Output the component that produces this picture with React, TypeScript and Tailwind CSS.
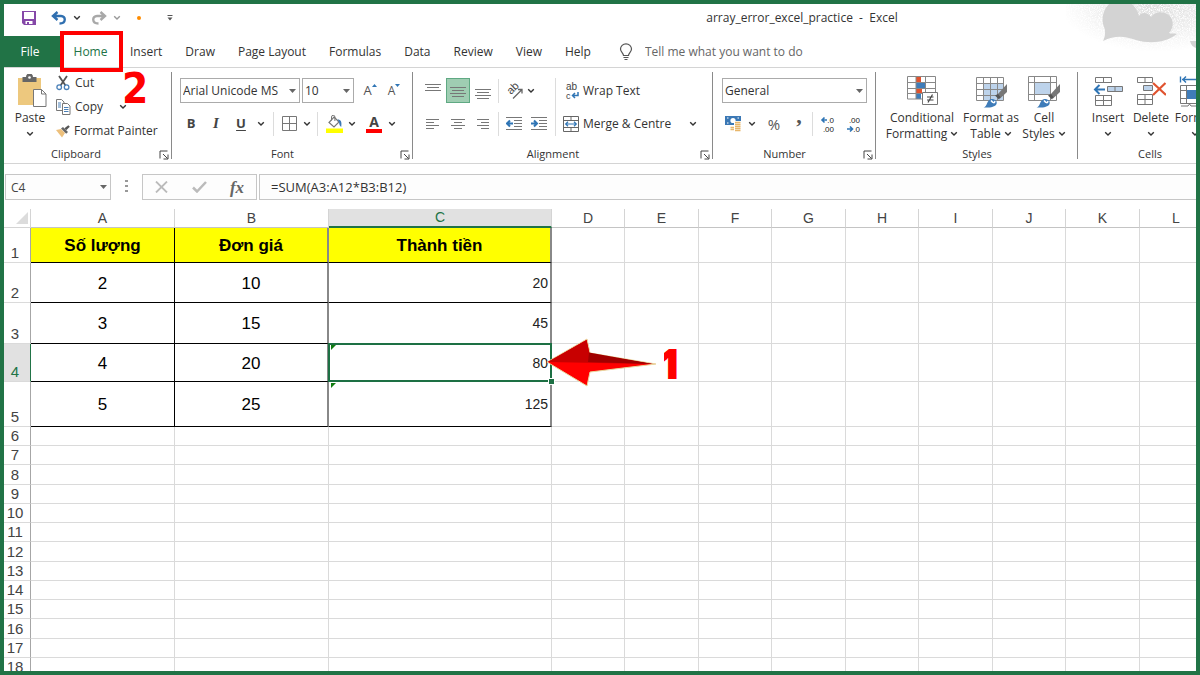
import type { ReactNode } from 'react';

const TABS = ['Insert', 'Draw', 'Page Layout', 'Formulas', 'Data', 'Review', 'View', 'Help'];

const COLUMNS = [
    { name: 'A', width: 144 },
    { name: 'B', width: 154 },
    { name: 'C', width: 223 },
    { name: 'D', width: 73 },
    { name: 'E', width: 74 },
    { name: 'F', width: 73 },
    { name: 'G', width: 74 },
    { name: 'H', width: 73 },
    { name: 'I', width: 74 },
    { name: 'J', width: 73 },
    { name: 'K', width: 74 },
    { name: 'L', width: 73 },
];

const ROWS: { height: number; cells?: string[] }[] = [
    { height: 35, cells: ['Số lượng', 'Đơn giá', 'Thành tiền'] },
    { height: 40, cells: ['2', '10', '20'] },
    { height: 41, cells: ['3', '15', '45'] },
    { height: 38, cells: ['4', '20', '80'] },
    { height: 45, cells: ['5', '25', '125'] },
    { height: 19 },
    { height: 19 },
    { height: 20 },
    { height: 19 },
    { height: 19 },
    { height: 19 },
    { height: 20 },
    { height: 19 },
    { height: 19 },
    { height: 19 },
    { height: 20 },
    { height: 19 },
    { height: 19 },
];

/* ---------- small shared pieces ---------- */

function Chevron({ className = 'text-[#333]' }: { className?: string }) {
    return (
        <svg className={`shrink-0 ${className}`} width="8" height="6" viewBox="0 0 8 6" fill="none" stroke="currentColor" strokeWidth="1.4">
            <path d="M1.2 1.2 4 4l2.8-2.8" />
        </svg>
    );
}

function Triangle() {
    return (
        <svg className="pointer-events-none absolute right-1 top-1/2 -translate-y-1/2" width="7" height="4" viewBox="0 0 7 4">
            <path d="M0 0h7L3.5 4z" fill="#666" />
        </svg>
    );
}

function Divider() {
    return <span className="h-6 w-px shrink-0 bg-[#dcdcdc]" />;
}

function IconButton({ label, className = 'w-6', children }: { label: string; className?: string; children: ReactNode }) {
    return (
        <button type="button" aria-label={label} className={`flex h-[25px] shrink-0 items-center justify-center ${className}`}>
            {children}
        </button>
    );
}

function Group({ title, className, launcher = true, children }: { title: string; className: string; launcher?: boolean; children: ReactNode }) {
    return (
        <section aria-label={title} className={`relative flex shrink-0 flex-col ${className}`}>
            <div className="h-[78px]">{children}</div>
            <div className="flex h-4 items-center justify-center text-[11px] text-[#333]">{title}</div>
            {launcher && (
                <button type="button" aria-label={`${title} settings`} className="absolute bottom-[3px] right-[3px]">
                    <svg width="10" height="10" viewBox="0 0 10 10" fill="none" stroke="#444" strokeWidth="1">
                        <path d="M1 8.5V1h7.5M4 4l4.5 4.5M4.5 9H9V4.5" />
                    </svg>
                </button>
            )}
            <span className="absolute bottom-1 right-0 top-1 w-px bg-[#8a8a8a]" />
        </section>
    );
}

/* ---------- icons ---------- */

function SaveIcon() {
    return (
        <svg width="14" height="14" viewBox="0 0 14 14">
            <path d="M0 0h14v14H2l-2-2z" fill="#8548a8" />
            <path d="M2 1h10v7H2z" fill="#fff" />
            <path d="M3.5 10h7v3h-7z" fill="#fff" />
            <path d="M5 11h2v2H5z" fill="#8548a8" />
        </svg>
    );
}

function UndoIcon({ className }: { className: string }) {
    return (
        <svg className={className} width="16" height="14" viewBox="0 0 16 14" fill="none" stroke="currentColor" strokeWidth="2.4">
            <path d="M6.500 1 2 5l4.500 4M2.500 5H10c5 0 5.500 7.500-1.500 7.500" />
        </svg>
    );
}

function PasteIcon() {
    return (
        <svg width="30" height="34" viewBox="0 0 30 34">
            <path d="M1 4h23v27H1z" fill="#edc87e" />
            <path d="M5.500 3H9a3.500 3.500 0 0 1 7 0h3.500v5h-14z" fill="#666" />
            <circle cx="12.500" cy="3.500" r="1.300" fill="#fff" />
            <path d="M16.500 15.500h8l4.500 4.500v12.500H16.500z" fill="#fff" stroke="#777" />
            <path d="M24.500 15.500V20H29" fill="none" stroke="#777" />
        </svg>
    );
}

function CutIcon() {
    return (
        <svg width="14" height="16" viewBox="0 0 14 16" fill="none">
            <path d="m3 1 6.500 9.500M11 1 4.500 10.500" stroke="#555" strokeWidth="1.800" />
            <circle cx="3.200" cy="12.200" r="2.300" stroke="#4a80b8" strokeWidth="1.300" />
            <circle cx="10.600" cy="12.200" r="2.300" stroke="#4a80b8" strokeWidth="1.300" />
        </svg>
    );
}

function CopyIcon() {
    return (
        <svg width="15" height="16" viewBox="0 0 15 16" fill="#fff" stroke="#777">
            <path d="M.500.500h5l2.500 2.500v8.500H.500z" />
            <path d="M2 4h3M2 6h3M2 8h3" stroke="#4a80b8" />
            <path d="M6.500 4.500h5l2.500 2.500v8.500H6.500z" />
            <path d="M8 8.500h4.500M8 10.500h4.500M8 12.500h4.500" stroke="#4a80b8" />
        </svg>
    );
}

function PainterIcon() {
    return (
        <svg width="14" height="13" viewBox="0 0 14 13">
            <path d="m0 5 5-1 4 4-3 4.500z" fill="#edc07c" />
            <path d="m5 3.500 2-1.500 5 5-1.800 1.700z" fill="#666" />
            <path d="m8.500 3.200 3.800-3 1.500 1.600-3.600 3.400z" fill="#555" />
        </svg>
    );
}

function BorderIcon() {
    return (
        <svg width="15" height="15" viewBox="0 0 15 15" fill="none" stroke="#777">
            <path d="M.500.500h14v14H.500zM7.500.500v14M.500 7.500h14" />
        </svg>
    );
}

function FillIcon() {
    return (
        <svg width="17" height="18" viewBox="0 0 17 18">
            <path d="m8 2 5 5-5 5-5-4.500z" fill="#fff" stroke="#777" strokeWidth="1.200" />
            <path d="M5.500 5.500V2a1.700 1.700 0 0 1 3.400 0v4" fill="none" stroke="#777" />
            <path d="M11.500 4.500c3.500 0 4.500 2 3.700 7.500-1.500-1-2-3-2.200-5z" fill="#3b78b5" />
            <path d="M0 13.500h17v4.500H0z" fill="#ff0" />
        </svg>
    );
}

/* Stack of horizontal rules; each entry is [x1, x2, y]. */
function Lines({ rows }: { rows: number[][] }) {
    return (
        <svg width="16" height="16" viewBox="0 0 16 16" stroke="#777">
            {rows.map(([a, b, y]) => (
                <path key={y} d={`M${a} ${y + 0.5}H${b}`} />
            ))}
        </svg>
    );
}

function IndentIcon({ flip = false }: { flip?: boolean }) {
    return (
        <svg width="16" height="15" viewBox="0 0 16 15" fill="none">
            <path d="M0 1.500h16M8 4.500h8M8 7.500h8M8 10.500h8M0 13.500h16" stroke="#777" />
            <path d={flip ? 'M0 7.500h5M3 4.500l3 3-3 3' : 'M7 7.500H2M4 4.500l-3 3 3 3'} stroke="#2f75b5" strokeWidth="2" />
        </svg>
    );
}

function OrientationIcon() {
    return (
        <svg className="overflow-visible" width="16" height="16" viewBox="0 0 16 16" fill="none" stroke="#666">
            <text x="4" y="12" transform="rotate(-45 4 12)" className="font-['Liberation_Sans']" fontSize="11" fill="#444" stroke="none">ab</text>
            <path d="M6 15.500 14.500 7M11 6.500h4v4" strokeWidth="1.300" />
        </svg>
    );
}

function WrapIcon() {
    return (
        <svg className="overflow-visible" width="14" height="18" viewBox="0 0 14 18">
            <text x="1" y="8" className="font-['Liberation_Sans']" fontSize="10" fill="#444">ab</text>
            <text x="1" y="17" className="font-['Liberation_Sans']" fontSize="9" fill="#444">c</text>
            <path d="M13 10v3.500H8M10 11l-2.500 2.500L10 16" fill="none" stroke="#2f75b5" strokeWidth="1.500" />
        </svg>
    );
}

function MergeIcon() {
    return (
        <svg width="16" height="16" viewBox="0 0 16 16" fill="none" stroke="#666">
            <path d="M.500.500h15v15H.500zM.500 4.500h15M.500 11.500h15M8 .500v4M8 11.500v4" />
            <path d="M2.500 8h11M5 5.800 2.700 8 5 10.200M11 5.800 13.300 8 11 10.200" stroke="#2f75b5" strokeWidth="1.200" />
        </svg>
    );
}

function MoneyIcon() {
    return (
        <svg width="16" height="17" viewBox="0 0 16 17">
            <path d="M0 1h16v9H0z" fill="#3b78b5" />
            <path d="M2 3h1.500M12.500 3H14M2 8h1.500" stroke="#fff" strokeWidth="1.200" />
            <circle cx="8" cy="5.500" r="2.600" fill="#fff" />
            <path d="M9 6h7v10H5v-5h4z" fill="#fff" />
            <path d="M10 7.500h5.500M10 9.500h5.500M10 11.500h5.500M10 13.500h5.500M10 15.500h5.500M5.500 12.500H9M5.500 14.500H9" stroke="#e8b66a" strokeWidth="1.300" />
        </svg>
    );
}

function DecimalIcon({ decrease = false }: { decrease?: boolean }) {
    return (
        <svg className="overflow-visible font-['Liberation_Sans']" width="14" height="18" viewBox="0 0 14 18" fontSize="8" fill="#222">
            <text x="13" y="8" textAnchor="end">{decrease ? '.00' : '.0'}</text>
            <text x="13" y="17" textAnchor="end">{decrease ? '.0' : '.00'}</text>
            <path
                d={decrease ? 'M0 14h5M3 11.500 5.500 14 3 16.500' : 'M6 5H1M3.500 2.500 1 5l2.500 2.500'}
                fill="none"
                stroke="#2f75b5"
                strokeWidth="1.600"
            />
        </svg>
    );
}

function ConditionalIcon() {
    return (
        <svg width="32" height="30" viewBox="0 0 32 30">
            <path d="M10 1h5v6h-5zM10 12.500h6V18h-6z" fill="#e0532f" />
            <path d="M10 7h9v5.500h-9zM10 18h5v5h-5z" fill="#3f7cb9" />
            <path d="M1.500.500h28v22.500h-28zM10 .500V23M19.500.500V23M1.500 6.500h28M1.500 12.500h28M1.500 17.500h28" fill="none" stroke="#888" />
            <path d="M16.500 16.500h15v12h-15z" fill="#fff" stroke="#777" />
            <path d="M21 21h6.500M21 24h6.500M26.500 18.500l-4.500 8" stroke="#444" strokeWidth="1.200" />
        </svg>
    );
}

function Brush() {
    return (
        <>
            <path d="M32 8v8l-7 6.500-3.500-3z" fill="#777" />
            <path d="m20 19.500 3-1.500 2.500 3-1.500 2.500z" fill="#555" />
            <path d="M8.500 31.500c4-1 3-7.500 8-8.500 4 0 6 2.500 5 5-1.500 3-7 4-13 3.500z" fill="#3f7cb9" />
            <path d="M16 24.500c2 2.500 3.500 3 4 .5" fill="none" stroke="#fff" strokeWidth="1.500" />
        </>
    );
}

function FormatTableIcon() {
    return (
        <svg width="32" height="32" viewBox="0 0 32 32">
            <path d="M8 8h20v16H8z" fill="#bdd3eb" />
            <path d="M1.500 1.500h27v23h-27zM8.500 1.500v23M15.500 1.500v23M22.500 1.500v23M1.500 7.500h27M1.500 13.500h27M1.500 19.500h27" fill="none" stroke="#888" />
            <Brush />
        </svg>
    );
}

function CellStylesIcon() {
    return (
        <svg width="32" height="32" viewBox="0 0 32 32">
            <path d="M7 6h16v13H7z" fill="#bdd3eb" />
            <path d="M.500.500h28v24H.500zM6.500.500v24M22.500.500v24M.500 6.500h28M.500 18.500h28" fill="none" stroke="#888" />
            <Brush />
        </svg>
    );
}

function InsertIcon() {
    return (
        <svg width="30" height="31" viewBox="0 0 30 31" fill="none" stroke="#777">
            <path d="M2.500 1.500h16v5h-16zM10.500 1.500v5M2.500 19.500h16v10h-16zM10.500 19.500v10M2.500 24.500h16" />
            <path d="M14.500 10.500h15v5h-15zM22 10.500v5" fill="#bdd3eb" />
            <path d="M12 13.500H2M6.500 9 2 13.500 6.500 18" stroke="#2f75b5" strokeWidth="2" />
        </svg>
    );
}

function DeleteIcon() {
    return (
        <svg width="30" height="31" viewBox="0 0 30 31" fill="none" stroke="#777">
            <path d="M1.500 1.500h15v5h-15zM9 1.500v5M1.500 18.500h15v10h-15zM9 18.500v10M1.500 23.500h15" />
            <path d="M7.500 9.500h9v5h-9z" fill="#bdd3eb" />
            <path d="m17 7 13 12M29.500 7 17 19" stroke="#e0532f" strokeWidth="2.200" />
        </svg>
    );
}

function FormatCellsIcon() {
    return (
        <svg width="32" height="31" viewBox="0 0 32 31" fill="none" stroke="#777">
            <path d="M1.500.500v6M3 3.500h24M7 .500l-3 3 3 3M30.500.500v6" stroke="#2f75b5" strokeWidth="1.400" />
            <path d="M1.500 9.500h28v18h-28zM7.500 9.500v18M1.500 14.500h28M1.500 22.500h28M2 30h7l1.500-2L12 30h8" />
            <path d="M8 14h16v9H8z" fill="#3f7cb9" stroke="none" />
        </svg>
    );
}

/* Pale cloud that decorates the right end of the title bar. */
function TitleArt() {
    return (
        <svg className="pointer-events-none absolute right-0 top-0" width="130" height="64" viewBox="0 0 130 64">
            <defs>
                <radialGradient id="haze" cx="0.700" cy="0" r="0.750">
                    <stop offset="0" stopColor="#000" stopOpacity="0.140" />
                    <stop offset="0.600" stopColor="#000" stopOpacity="0.060" />
                    <stop offset="1" stopColor="#000" stopOpacity="0" />
                </radialGradient>
                <filter id="grain">
                    <feTurbulence type="fractalNoise" baseFrequency="0.900" numOctaves="2" result="n" />
                    <feColorMatrix in="n" type="matrix" values="0 0 0 0 0  0 0 0 0 0  0 0 0 0 0  0 0 0 3 -0.800" result="m" />
                    <feComposite in="SourceGraphic" in2="m" operator="in" />
                </filter>
            </defs>
            <path d="M0 0h130v64H0z" fill="url(#haze)" filter="url(#grain)" />
            <path
                d="M43 0C37 6 35 15 38 23c2 5 1 10-1 14 12-6 22-5 33-1 14 4 29 3 41-6-3-1-6 0-8-1 6-6 5-17-4-20-6-2-11 0-14 4-3-5-10-5-12-1C72 7 69 3 66 0z"
                fill="#d3d3d3"
            />
            <path d="M124 37h6v7c-3-1-5-3-6-7z" fill="#d3d3d3" />
        </svg>
    );
}

/* ---------- ribbon ---------- */

function TitleBar() {
    return (
        <header className="relative flex h-8 shrink-0 items-center pb-1">
            <div className="flex w-[404px] shrink-0 items-center pl-[18px]">
                <button type="button" aria-label="Save" className="mr-[15px]"><SaveIcon /></button>
                <button type="button" aria-label="Undo" className="mr-1.5"><UndoIcon className="text-[#2f6fb0]" /></button>
                <button type="button" aria-label="Undo history" className="mr-2.5"><Chevron /></button>
                <button type="button" aria-label="Redo" className="mr-1.5"><UndoIcon className="-scale-x-100 text-[#a8a8a8]" /></button>
                <button type="button" aria-label="Redo history" className="mr-4"><Chevron className="text-[#999]" /></button>
                <span className="mr-[26px] size-1 rounded-full bg-[#ff8c00]" />
                <button type="button" aria-label="Customise toolbar">
                    <svg width="6" height="6" viewBox="0 0 6 6"><path d="M.500.500h5" stroke="#555" /><path d="M.500 2.500h5L3 5.500z" fill="#555" /></svg>
                </button>
            </div>
            <h1 className="flex-1 whitespace-pre text-center text-xs text-[#333]">array_error_excel_practice  -  Excel</h1>
        </header>
    );
}

function Tabs() {
    return (
        <nav className="relative flex h-8 shrink-0 items-stretch border-b border-[#d4d4d4] text-xs text-[#333]">
            <button type="button" className="w-14 bg-[#217346] pr-1 text-white">File</button>
            <button type="button" className="relative w-[61px] text-[#217346]">
                Home
                <span className="absolute -bottom-[5px] -top-[5px] left-0 right-[-2px] z-10 border-4 border-[#f00]" />
                <span className="absolute left-[62px] top-[31px] z-10 font-['DejaVu_Sans_Condensed','DejaVu_Sans',sans-serif] text-[42px] font-bold leading-[44px] text-[#f00]">2</span>
            </button>
            <div className="flex items-stretch gap-[23px] pl-[9px]">
                {TABS.map((tab) => (
                    <button key={tab} type="button" className="whitespace-nowrap">{tab}</button>
                ))}
            </div>
            <label className="ml-7 flex flex-1 items-center gap-3">
                <svg width="14" height="18" viewBox="0 0 14 18" fill="none" stroke="#555" strokeWidth="1.200">
                    <path d="M4.500 12.500C4.500 10 1.500 9 1.500 6a5.500 5.200 0 0 1 11 0c0 3-3 4-3 6.500zM4.500 14.500h5M5.500 16.500h3" />
                </svg>
                <input aria-label="Tell me" placeholder="Tell me what you want to do" className="min-w-0 flex-1 outline-none placeholder:text-[#666]" />
            </label>
        </nav>
    );
}

function Clipboard() {
    return (
        <Group title="Clipboard" className="w-[168px] pr-6">
            <div className="flex pt-1.5">
                <button type="button" className="flex w-[52px] shrink-0 flex-col items-center">
                    <span className="pl-1"><PasteIcon /></span>
                    <span className="mt-0.5 leading-4">Paste</span>
                    <span className="mt-[5px] flex"><Chevron /></span>
                </button>
                <div className="flex flex-col whitespace-nowrap">
                    <button type="button" className="flex h-[18px] items-center gap-[5px]"><CutIcon />Cut</button>
                    <div className="mt-1.5 flex h-[18px] items-center">
                        <button type="button" className="flex items-center gap-1"><CopyIcon />Copy</button>
                        <button type="button" aria-label="Copy options" className="ml-4"><Chevron /></button>
                    </div>
                    <button type="button" className="mt-1.5 flex h-[18px] items-center gap-1"><PainterIcon />Format Painter</button>
                </div>
            </div>
        </Group>
    );
}

function FontGroup() {
    return (
        <Group title="Font" className="w-[241px] pr-5">
            <div className="flex items-center pl-2 pt-2.5">
                <div className="relative w-[120px] shrink-0">
                    <select aria-label="Font name" className="block h-[25px] w-full appearance-none border border-[#ababab] pl-0.5 text-xs">
                        <option>Arial Unicode MS</option>
                    </select>
                    <Triangle />
                </div>
                <div className="relative ml-0.5 w-[52px] shrink-0">
                    <select aria-label="Font size" className="block h-[25px] w-full appearance-none border border-[#ababab] pl-0.5 text-xs">
                        <option>10</option>
                    </select>
                    <Triangle />
                </div>
                <IconButton label="Increase font size" className="ml-1 w-6">
                    <span className="text-[13px] text-[#555]">A</span>
                    <svg className="mb-2.5" width="5" height="3" viewBox="0 0 5 3"><path d="M0 3 2.500 0 5 3z" fill="#2f75b5" /></svg>
                </IconButton>
                <IconButton label="Decrease font size">
                    <span className="text-xs text-[#555]">A</span>
                    <svg className="mb-2.5" width="5" height="3" viewBox="0 0 5 3"><path d="M0 0h5L2.500 3z" fill="#2f75b5" /></svg>
                </IconButton>
            </div>
            <div className="flex items-center pl-[7px] pt-2 text-[#444]">
                <IconButton label="Bold"><b className="text-[13px]">B</b></IconButton>
                <IconButton label="Italic" className="w-[26px]"><i className="font-['Liberation_Serif',serif] text-[15px] font-bold">I</i></IconButton>
                <IconButton label="Underline"><b className="text-[13px] underline underline-offset-2">U</b></IconButton>
                <IconButton label="Underline options" className="mr-1 w-4"><Chevron /></IconButton>
                <Divider />
                <IconButton label="Borders" className="ml-px w-7"><BorderIcon /></IconButton>
                <IconButton label="Border options" className="mr-1.5 w-2"><Chevron /></IconButton>
                <Divider />
                <IconButton label="Fill colour" className="ml-0.5 w-7"><FillIcon /></IconButton>
                <IconButton label="Fill colour options" className="w-2"><Chevron /></IconButton>
                <IconButton label="Font colour" className="ml-1 w-7">
                    <b className="flex h-[18px] w-4 items-center justify-center border-b-4 border-[#f00] text-sm leading-none">A</b>
                </IconButton>
                <IconButton label="Font colour options" className="w-2"><Chevron /></IconButton>
            </div>
        </Group>
    );
}

function AlignmentGroup() {
    return (
        <Group title="Alignment" className="w-[300px] pr-5">
            <div className="grid grid-cols-[142px_1fr] pt-2.5">
                <div className="flex flex-col gap-2 pl-[7px]">
                    <div className="flex items-center">
                        <IconButton label="Top align" className="w-[26px]"><Lines rows={[[0, 16, 1], [2, 14, 4], [0, 16, 7]]} /></IconButton>
                        <button type="button" aria-label="Middle align" aria-pressed="true" className="flex h-[25px] w-6 items-center justify-center border border-[#5fa983] bg-[#9fcdb2]">
                            <Lines rows={[[0, 16, 4], [2, 14, 7], [0, 16, 10], [2, 14, 13]]} />
                        </button>
                        <IconButton label="Bottom align" className="w-[26px]"><Lines rows={[[0, 16, 6], [2, 14, 9], [0, 16, 12], [2, 14, 15]]} /></IconButton>
                        <span className="w-0.5" />
                        <Divider />
                        <IconButton label="Orientation" className="ml-1 w-6"><OrientationIcon /></IconButton>
                        <IconButton label="Orientation options" className="w-2"><Chevron /></IconButton>
                    </div>
                    <div className="flex items-center">
                        <IconButton label="Align left" className="w-[26px]"><Lines rows={[[1, 14, 3], [1, 9, 6], [1, 14, 9], [1, 9, 12]]} /></IconButton>
                        <IconButton label="Centre"><Lines rows={[[1, 15, 3], [4, 12, 6], [1, 15, 9], [4, 12, 12]]} /></IconButton>
                        <IconButton label="Align right" className="w-[26px]"><Lines rows={[[2, 14, 3], [6, 14, 6], [2, 14, 9], [6, 14, 12]]} /></IconButton>
                        <span className="w-0.5" />
                        <Divider />
                        <IconButton label="Decrease indent" className="ml-[3px] w-6"><IndentIcon /></IconButton>
                        <IconButton label="Increase indent" className="w-[26px]"><IndentIcon flip /></IconButton>
                    </div>
                </div>
                <div className="flex flex-col gap-2 border-l border-[#dcdcdc] pl-[7px]">
                    <button type="button" className="flex h-[25px] items-center gap-1 whitespace-nowrap"><span className="flex w-4 justify-end"><WrapIcon /></span>Wrap Text</button>
                    <div className="flex h-[25px] items-center">
                        <button type="button" className="flex items-center gap-1 whitespace-nowrap"><MergeIcon />Merge &amp; Centre</button>
                        <button type="button" aria-label="Merge options" className="ml-auto -mr-1"><Chevron /></button>
                    </div>
                </div>
            </div>
        </Group>
    );
}

function NumberGroup() {
    return (
        <Group title="Number" className="w-[163px] pr-5">
            <div className="w-[154px] pl-[9px] pt-2.5">
                <div className="relative">
                    <select aria-label="Number format" className="block h-[25px] w-full appearance-none border border-[#ababab] pl-0.5 text-xs">
                        <option>General</option>
                    </select>
                    <Triangle />
                </div>
                <div className="mt-2 flex items-center text-[#555]">
                    <IconButton label="Accounting format" className="w-[22px]"><MoneyIcon /></IconButton>
                    <IconButton label="Accounting options" className="ml-0.5 w-3"><Chevron /></IconButton>
                    <IconButton label="Percent" className="ml-1 w-6"><span className="text-[15px]">%</span></IconButton>
                    <IconButton label="Comma" className="w-[26px]"><b className="mb-4 font-['Liberation_Serif',serif] text-[22px] leading-none">,</b></IconButton>
                    <span className="w-1" />
                    <Divider />
                    <IconButton label="Increase decimal" className="ml-0.5 w-[26px]"><DecimalIcon /></IconButton>
                    <IconButton label="Decrease decimal" className="w-[26px]"><DecimalIcon decrease /></IconButton>
                </div>
            </div>
        </Group>
    );
}

function BigButton({ icon, lines, className }: { icon: ReactNode; lines: string[]; className: string }) {
    return (
        <button type="button" className={`flex shrink-0 flex-col items-center whitespace-nowrap ${className}`}>
            <span className="flex h-8">{icon}</span>
            <span className="mt-0.5 leading-4">{lines[0]}</span>
            <span className="flex h-4 items-center gap-[3px]">
                {lines[1]}
                <Chevron />
            </span>
        </button>
    );
}

function StylesGroup() {
    return (
        <Group title="Styles" className="w-[202px]" launcher={false}>
            <div className="flex pl-2.5 pt-2">
                <BigButton className="w-[72px]" icon={<ConditionalIcon />} lines={['Conditional', 'Formatting']} />
                <BigButton className="w-[66px]" icon={<FormatTableIcon />} lines={['Format as', 'Table']} />
                <BigButton className="w-10" icon={<CellStylesIcon />} lines={['Cell', 'Styles']} />
            </div>
        </Group>
    );
}

function CellsGroup() {
    return (
        <section aria-label="Cells" className="min-w-0 flex-1 overflow-hidden">
            <div className="flex h-[78px] pl-2 pt-2">
                <BigButton className="w-11" icon={<InsertIcon />} lines={['Insert', '']} />
                <BigButton className="w-[42px]" icon={<DeleteIcon />} lines={['Delete', '']} />
                <BigButton className="w-[46px]" icon={<FormatCellsIcon />} lines={['Format', '']} />
            </div>
            <div className="flex h-4 w-36 items-center justify-center text-[11px] text-[#333]">Cells</div>
        </section>
    );
}

function FormulaBar() {
    return (
        <div className="flex h-[45px] shrink-0 items-start pl-px pt-2.5">
            <div className="relative w-[106px] shrink-0">
                <input aria-label="Name box" defaultValue="C4" className="block h-[26px] w-full border border-[#c6c6c6] bg-[#fdfdfd] pl-[5px] text-xs text-[#444] outline-none" />
                <Triangle />
            </div>
            <svg className="mx-3.5 mt-1.5 shrink-0" width="3" height="12" viewBox="0 0 3 12" fill="#999">
                <path d="M0 0h3v2H0zM0 5h3v2H0zM0 10h3v2H0z" />
            </svg>
            <div className="flex h-[26px] w-[115px] shrink-0 items-center border border-[#c6c6c6] bg-[#fdfdfd]">
                <IconButton label="Cancel" className="w-9">
                    <svg width="13" height="12" viewBox="0 0 13 12" stroke="#bbb" strokeWidth="1.800"><path d="m1 .500 11 11M12 .500l-11 11" /></svg>
                </IconButton>
                <IconButton label="Enter" className="w-10">
                    <svg width="15" height="12" viewBox="0 0 15 12" fill="none" stroke="#bbb" strokeWidth="2.500"><path d="m1 6.500 4 4L14 1" /></svg>
                </IconButton>
                <IconButton label="Insert function" className="w-9">
                    <i className="font-['Liberation_Serif',serif] text-[17px] font-bold leading-none text-[#666]">fx</i>
                </IconButton>
            </div>
            <input
                aria-label="Formula"
                defaultValue="=SUM(A3:A12*B3:B12)"
                className="ml-0.5 h-[26px] min-w-0 flex-1 border border-r-0 border-[#c6c6c6] bg-[#fdfdfd] pl-[11px] text-[13px] text-[#333] outline-none"
            />
        </div>
    );
}

/* ---------- sheet ---------- */

function ErrorMark() {
    return (
        <svg className="absolute left-0.5 top-px" width="5" height="5" viewBox="0 0 5 5">
            <path d="M0 0h5L0 5z" fill="#107c10" />
        </svg>
    );
}

/* Red pointer and step number beside the selected cell. */
function Pointer() {
    return (
        <div className="pointer-events-none absolute left-full top-1/2 z-20 flex -translate-y-1/2 items-center text-left">
            <svg className="-ml-1 shrink-0" width="112" height="50" viewBox="0 0 112 50">
                <path d="M1 24 41 1l3 14 66 11-66 8-3 14z" fill="#f00" stroke="#e8d9a0" />
                <path d="M1.500 24 40.500 2l3 13.500L106 26z" fill="#c80000" />
                <path d="m43 14.500 64 11.500-65-2z" fill="#a00000" />
            </svg>
            <span className="ml-1.5 flex h-11 w-[18px] shrink-0 items-center justify-end overflow-hidden font-['Open_Sans',sans-serif] text-[43px] font-extrabold leading-[44px] text-[#f00]">1</span>
        </div>
    );
}

function Cell({ row, col }: { row: number; col: number }) {
    const text = ROWS[row].cells?.[col];
    if (text === undefined) {
        return <td className="border-b border-r border-[#dadada]" />;
    }
    const edge = col === 0 ? 'border-r border-r-black' : 'border-r-2 border-r-[#888]';
    if (row === 0) {
        return <td className={`border-b border-b-black bg-[#ff0] pt-0.5 text-center text-[17px] font-bold leading-5 text-black ${edge}`}>{text}</td>;
    }
    if (col < 2) {
        return <td className={`border-b border-b-black pt-0.5 text-center text-[17px] leading-5 text-black ${edge}`}>{text}</td>;
    }
    return (
        <td className={`relative border-b border-b-black pr-0.5 text-right text-sm leading-5 text-[#222] ${edge}`}>
            {text}
            {row === 3 && (
                <>
                    <span className="absolute -bottom-px -left-px -right-0.5 -top-px border-2 border-[#1d7044]" />
                    <span className="absolute -bottom-[3px] -right-1 z-10 size-[5px] bg-[#1d7044] outline outline-white" />
                    <Pointer />
                </>
            )}
            {row >= 3 && <ErrorMark />}
        </td>
    );
}

function Sheet() {
    return (
        <div className="min-h-0 flex-1 overflow-hidden">
            <table className="w-full min-w-[1209px] table-fixed border-separate border-spacing-0 font-['Liberation_Sans',Arial,sans-serif] text-[#444]">
                <colgroup>
                    <col style={{ width: 27 }} />
                    {COLUMNS.map((c) => (
                        <col key={c.name} style={{ width: c.width }} />
                    ))}
                </colgroup>
                <thead>
                    <tr className="h-[19px]">
                        <th aria-label="Select all" className="border-b border-r border-[#d4d4d4] p-0">
                            <svg className="ml-auto mr-0.5" width="12" height="12" viewBox="0 0 12 12"><path d="M12 0v12H0z" fill="#dcdcdc" /></svg>
                        </th>
                        {COLUMNS.map((c) => (
                            <th
                                key={c.name}
                                scope="col"
                                className={`border-r border-r-[#d4d4d4] p-0 text-sm font-normal leading-[17px] ${c.name === 'C' ? 'border-b-2 border-b-[#217346] bg-[#e1e1e1] text-[#217346]' : 'border-b border-b-[#c4c4c4]'}`}
                            >
                                {c.name}
                            </th>
                        ))}
                    </tr>
                </thead>
                <tbody>
                    {ROWS.map((r, i) => (
                        <tr key={i} style={{ height: r.height }}>
                            <th
                                scope="row"
                                className={`border-b border-r border-b-[#dadada] p-0 pr-1 align-bottom text-[15px] font-normal leading-[18px] ${i === 3 ? 'border-r-[#217346] bg-[#e1e1e1] text-[#217346]' : 'border-r-[#a6a6a6]'}`}
                            >
                                {i + 1}
                            </th>
                            {COLUMNS.map((c, j) => (
                                <Cell key={c.name} row={i} col={j} />
                            ))}
                        </tr>
                    ))}
                </tbody>
            </table>
        </div>
    );
}

export default function App() {
    return (
        <div className="relative flex h-screen w-full flex-col overflow-hidden border-4 border-[#217346] bg-white font-['Open_Sans','Noto_Sans',sans-serif]">
            <TitleArt />
            <TitleBar />
            <Tabs />
            <div className="flex h-24 shrink-0 border-b border-[#d4d4d4] text-xs text-[#333]">
                <Clipboard />
                <FontGroup />
                <AlignmentGroup />
                <NumberGroup />
                <StylesGroup />
                <CellsGroup />
            </div>
            <FormulaBar />
            <Sheet />
        </div>
    );
}
